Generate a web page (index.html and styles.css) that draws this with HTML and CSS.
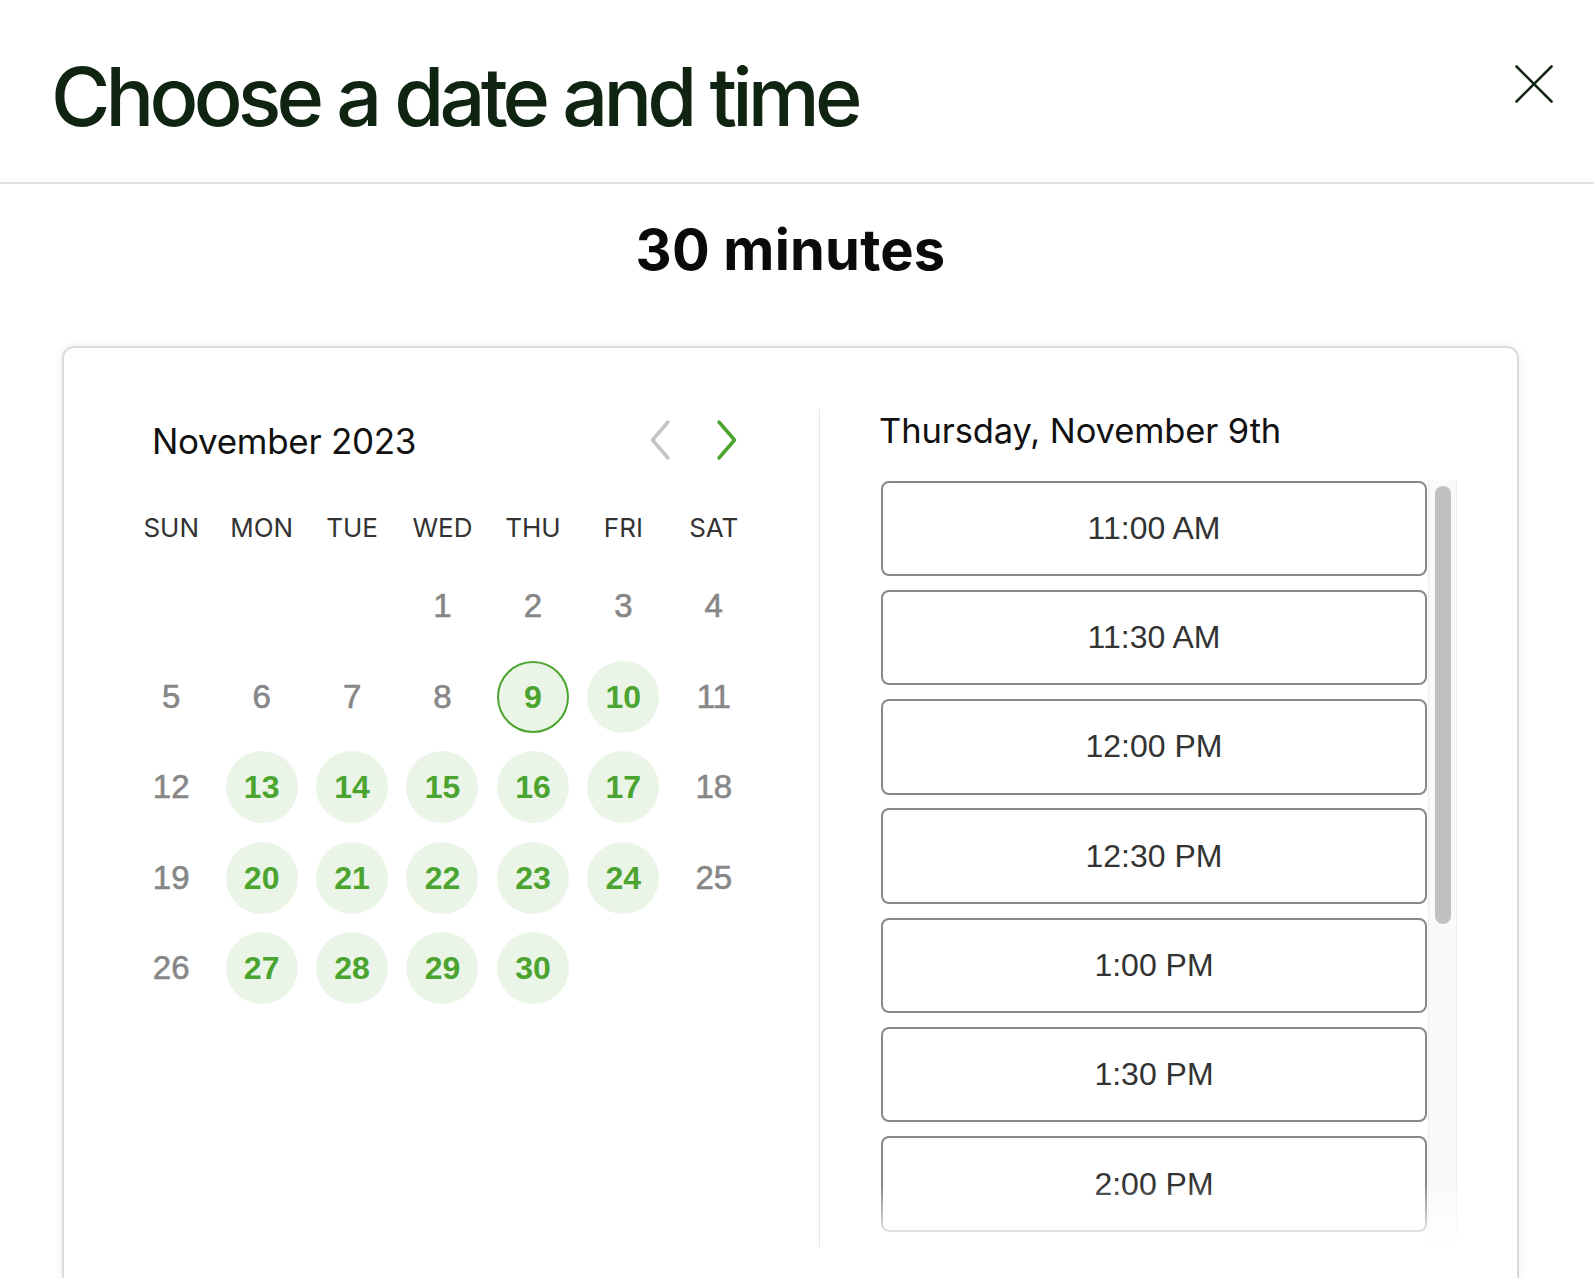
FILE: index.html
```html
<!DOCTYPE html>
<html lang="en">
<head>
<meta charset="utf-8">
<title>Choose a date and time</title>
<link rel="stylesheet" href="styles.css">
</head>
<body>
<header class="topbar">
  <h1 class="title">Choose a date and time</h1>
  <button class="close" aria-label="Close">
    <svg width="38" height="38" viewBox="0 0 38 38"><path d="M1.5 1.5 L36.5 36.5 M36.5 1.5 L1.5 36.5" stroke="#0f2712" stroke-width="2.6" stroke-linecap="round" fill="none"/></svg>
  </button>
</header>
<main class="main">
  <h2 class="duration">30 minutes</h2>
  <section class="card">
    <div class="cal">
      <div class="cal-head">
        <span class="month">November 2023</span>
        <div class="nav">
          <svg class="chev" width="26" height="44" viewBox="0 0 26 44"><path d="M21 4 L5.5 22 L21 40" stroke="#c4c4c4" stroke-width="3.5" stroke-linecap="round" stroke-linejoin="round" fill="none"/></svg>
          <svg class="chev" width="26" height="44" viewBox="0 0 26 44"><path d="M5 4 L20.5 22 L5 40" stroke="#4ba42f" stroke-width="3.5" stroke-linecap="round" stroke-linejoin="round" fill="none"/></svg>
        </div>
      </div>
      <div class="weekdays">
        <span>SUN</span><span>MON</span><span>TUE</span><span>WED</span><span>THU</span><span>FRI</span><span>SAT</span>
      </div>
      <div class="days">
        <span class="day"></span><span class="day"></span><span class="day"></span>
        <span class="day"><span class="num">1</span></span>
        <span class="day"><span class="num">2</span></span>
        <span class="day"><span class="num">3</span></span>
        <span class="day"><span class="num">4</span></span>
        <span class="day"><span class="num">5</span></span>
        <span class="day"><span class="num">6</span></span>
        <span class="day"><span class="num">7</span></span>
        <span class="day"><span class="num">8</span></span>
        <span class="day"><span class="num avail selected">9</span></span>
        <span class="day"><span class="num avail">10</span></span>
        <span class="day"><span class="num">11</span></span>
        <span class="day"><span class="num">12</span></span>
        <span class="day"><span class="num avail">13</span></span>
        <span class="day"><span class="num avail">14</span></span>
        <span class="day"><span class="num avail">15</span></span>
        <span class="day"><span class="num avail">16</span></span>
        <span class="day"><span class="num avail">17</span></span>
        <span class="day"><span class="num">18</span></span>
        <span class="day"><span class="num">19</span></span>
        <span class="day"><span class="num avail">20</span></span>
        <span class="day"><span class="num avail">21</span></span>
        <span class="day"><span class="num avail">22</span></span>
        <span class="day"><span class="num avail">23</span></span>
        <span class="day"><span class="num avail">24</span></span>
        <span class="day"><span class="num">25</span></span>
        <span class="day"><span class="num">26</span></span>
        <span class="day"><span class="num avail">27</span></span>
        <span class="day"><span class="num avail">28</span></span>
        <span class="day"><span class="num avail">29</span></span>
        <span class="day"><span class="num avail">30</span></span>
      </div>
    </div>
    <div class="times">
      <h3 class="date-label">Thursday, November 9th</h3>
      <div class="slots-wrap">
        <div class="slots">
          <button class="slot">11:00 AM</button>
          <button class="slot">11:30 AM</button>
          <button class="slot">12:00 PM</button>
          <button class="slot">12:30 PM</button>
          <button class="slot">1:00 PM</button>
          <button class="slot">1:30 PM</button>
          <button class="slot">2:00 PM</button>
        </div>
        <div class="scrollbar"><div class="thumb"></div></div>
      </div>
    </div>
  </section>
</main>
</body>
</html>
```

FILE: styles.css
```css
* { box-sizing: border-box; }

body {
  margin: 0;
  background: #ffffff;
  font-family: Inter, "Liberation Sans", sans-serif;
  color: #111111;
}

.topbar {
  height: 184px;
  border-bottom: 2px solid #dfe3df;
  display: flex;
  align-items: flex-start;
  justify-content: space-between;
  padding: 57px 41px 0 51px;
}

.title {
  margin: 0;
  font-family: Inter, "Liberation Sans", sans-serif;
  font-weight: 500;
  font-size: 81px;
  line-height: 1;
  letter-spacing: -4.8px;
  color: #0f2512;
}

.close {
  margin-top: 8px;
  padding: 0;
  border: 0;
  background: none;
  display: block;
  line-height: 0;
}

.main {
  padding: 0 75px 0 62px;
}

.duration {
  margin: 38px 0 0;
  text-align: center;
  font-family: Inter, "Liberation Sans", sans-serif;
  font-weight: 700;
  font-size: 56px;
  line-height: 1;
  letter-spacing: 0.2px;
  color: #0a0a0a;
}

.card {
  margin-top: 68px;
  border: 2px solid #dadada;
  border-radius: 12px;
  box-shadow: 0 0 10px rgba(0, 0, 0, 0.07);
  display: flex;
  padding: 61px 60px 60px 0;
}

/* calendar */
.cal {
  width: 756px;
  flex-shrink: 0;
  border-right: 1px solid #e6e6e6;
  padding: 0 60px 0 62px;
}

.cal-head {
  height: 61px;
  display: flex;
  align-items: flex-start;
  justify-content: space-between;
  padding: 0 19px 0 26px;
}

.month {
  margin-top: 15px;
  font-size: 35px;
  line-height: 1;
  letter-spacing: -0.3px;
  color: #111111;
}

.nav {
  display: flex;
  gap: 41px;
  margin-top: 9px;
}

.chev { display: block; }

.weekdays {
  margin-top: 38px;
  display: grid;
  grid-template-columns: repeat(7, 1fr);
  height: 40px;
  line-height: 40px;
  font-size: 26px;
  color: #333333;
  text-align: center;
}

.days {
  margin-top: 13px;
  display: grid;
  grid-template-columns: repeat(7, 1fr);
  grid-auto-rows: 90.5px;
}

.day {
  display: flex;
  align-items: center;
  justify-content: center;
}

.num {
  width: 72px;
  height: 72px;
  border-radius: 50%;
  text-align: center;
  font-family: "Liberation Sans", Arial, sans-serif;
  font-size: 33px;
  line-height: 72px;
  color: #878787;
  -webkit-text-stroke: 0.6px #878787;
}

.num.avail {
  background: #eaf5e7;
  color: #4ba42f;
  font-weight: 700;
  font-size: 32px;
  -webkit-text-stroke: 0;
}

.num.selected {
  border: 2px solid #4ba42f;
  line-height: 68px;
}

/* times */
.times {
  flex: 1;
  padding-left: 59px;
  display: flex;
  flex-direction: column;
}

.date-label {
  margin: 5px 0 0;
  font-weight: 400;
  font-size: 34.5px;
  line-height: 1;
  letter-spacing: -0.1px;
  color: #111111;
}

.slots-wrap {
  margin-top: 31px;
  margin-left: 2px;
  height: 767px;
  display: flex;
  position: relative;
}

.slots-wrap::after {
  content: "";
  position: absolute;
  left: 0;
  right: 0;
  bottom: 0;
  height: 62px;
  background: linear-gradient(rgba(255, 255, 255, 0), rgba(255, 255, 255, 1));
  pointer-events: none;
}

.slots {
  flex: 1;
  margin-right: 1px;
  overflow: hidden;
  display: flex;
  flex-direction: column;
  gap: 13.8px;
  padding-top: 1px;
}

.slot {
  flex-shrink: 0;
  height: 95.5px;
  border: 2px solid #888888;
  border-radius: 8px;
  background: #ffffff;
  font-family: "Liberation Sans", Arial, sans-serif;
  font-size: 32px;
  color: #333333;
  padding: 0;
}

.scrollbar {
  width: 29px;
  flex-shrink: 0;
  background: #fafafa;
  border-left: 1px solid #ececec;
  border-right: 1px solid #f0f0f0;
  padding: 6px 5px 0 6px;
}

.thumb {
  height: 438px;
  border-radius: 8px;
  background: #c1c1c1;
}
```
